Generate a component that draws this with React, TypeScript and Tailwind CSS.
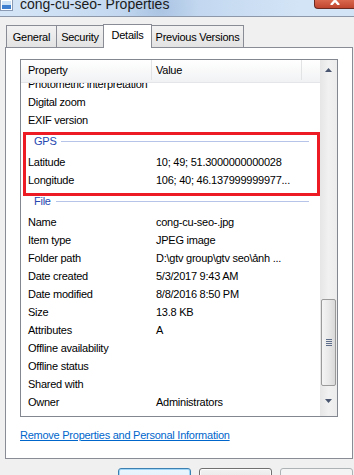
import React from 'react';

const font = { fontFamily: '"Liberation Sans", Arial, sans-serif' };

type Row = { p: string; v?: string };

const topRows: Row[] = [
  { p: 'Photometric interpretation' },
  { p: 'Digital zoom' },
  { p: 'EXIF version' },
];

const gpsRows: Row[] = [
  { p: 'Latitude', v: '10; 49; 51.3000000000028' },
  { p: 'Longitude', v: '106; 40; 46.137999999977...' },
];

const fileRows: Row[] = [
  { p: 'Name', v: 'cong-cu-seo-.jpg' },
  { p: 'Item type', v: 'JPEG image' },
  { p: 'Folder path', v: 'D:\\gtv group\\gtv seo\\ảnh ...' },
  { p: 'Date created', v: '5/3/2017 9:43 AM' },
  { p: 'Date modified', v: '8/8/2016 8:50 PM' },
  { p: 'Size', v: '13.8 KB' },
  { p: 'Attributes', v: 'A' },
  { p: 'Offline availability' },
  { p: 'Offline status' },
  { p: 'Shared with' },
  { p: 'Owner', v: 'Administrators' },
];

function PropRow({ p, v }: Row) {
  return (
    <div className="flex h-[18px] items-center whitespace-nowrap text-black">
      <div className="w-[135px] shrink-0 pl-[7px]">{p}</div>
      <div>{v}</div>
    </div>
  );
}

function GroupHeader({ label }: { label: string }) {
  return (
    <div className="flex h-[24px] items-center pt-[1px] pl-[13px] pr-[11px]">
      <span className="text-[#2647b0]">{label}</span>
      <div className="ml-[5px] h-px flex-1 bg-[#b7c4ea]" />
    </div>
  );
}

function Scrollbar() {
  return (
    <div className="flex w-[17px] shrink-0 flex-col bg-gradient-to-r from-[#e6e6e6] via-[#f1f1f1] to-[#ececec]">
      <div className="flex h-[17px] items-center justify-center pt-[3px]">
        <svg width="7" height="4" viewBox="0 0 7 4">
          <path d="M3.5 0 L7 4 L0 4 Z" fill="#4a5670" />
        </svg>
      </div>
      <div className="h-[222px]" />
      <div className="mx-[1px] flex h-[87px] items-center justify-center rounded-[2px] border border-[#9a9a9a] bg-gradient-to-r from-[#f4f4f4] via-[#e9e9e9] to-[#d9d9d9]">
        <div className="flex flex-col gap-[1px]">
          <div className="h-px w-[6px] bg-[#5e6e8a]" />
          <div className="h-px w-[6px] bg-[#5e6e8a]" />
          <div className="h-px w-[6px] bg-[#5e6e8a]" />
          <div className="h-px w-[6px] bg-[#5e6e8a]" />
        </div>
      </div>
      <div className="flex flex-1 items-center justify-center">
        <svg width="7" height="4" viewBox="0 0 7 4">
          <path d="M0 0 L7 0 L3.5 4 Z" fill="#4a5670" />
        </svg>
      </div>
    </div>
  );
}

export default function App() {
  return (
    <div
      className="h-[475px] w-[354px] overflow-hidden bg-[#f0f0f0] text-[11px] tracking-[-0.25px]"
      style={font}
    >
      {/* Title bar */}
      <div className="flex h-[17px] border-b border-[#8d99aa] bg-[radial-gradient(circle_at_160px_8px,#a9c3e2_0,#c3d8f0_40px,#d3e4f6_140px)]">
        <svg width="13" height="11" viewBox="0 0 13 11" className="shrink-0">
          <rect x="0.5" y="-1" width="12" height="11.5" fill="#ffffff" stroke="#8a9bb3" />
          <rect x="2" y="5" width="9" height="4" fill="#3f7fd0" />
          <rect x="2" y="1" width="9" height="4" fill="#cfe3f7" />
        </svg>
        <div className="ml-[7px] mt-[-3px] text-[14px] leading-[14px] tracking-normal text-[#1b1b1b]">
          cong-cu-seo- Properties
        </div>
        <div className="flex-1" />
        <div className="flex h-[9px] w-[40px] justify-center overflow-hidden rounded-bl-[4px] border-b border-l border-[#6a2a22] bg-gradient-to-b from-[#d9674e] to-[#c0452f]">
          <svg width="10" height="9" viewBox="0 0 10 9" className="mt-[-4px]">
            <path d="M1 0 L9 9 M9 0 L1 9" stroke="#ffffff" strokeWidth="2.4" />
          </svg>
        </div>
      </div>

      {/* Tabs */}
      <div className="mt-[7px] flex h-[23px] items-end pl-[6px]">
        <div className="z-0 flex h-[22px] w-[51px] items-center justify-center border border-b-0 border-[#898c95] bg-gradient-to-b from-[#f2f2f2] to-[#e3e3e3] pt-[2px]">
          General
        </div>
        <div className="z-0 -ml-px flex h-[22px] w-[48px] items-center justify-center border border-b-0 border-[#898c95] bg-gradient-to-b from-[#f2f2f2] to-[#e3e3e3] pt-[2px]">
          Security
        </div>
        <div className="relative z-10 -mb-px -ml-px flex h-[24px] w-[49px] items-center justify-center border border-b-0 border-[#898c95] bg-white pb-[2px]">
          Details
        </div>
        <div className="z-0 -ml-px flex h-[22px] w-[93px] items-center justify-center border border-b-0 border-[#898c95] bg-gradient-to-b from-[#f2f2f2] to-[#e3e3e3] pt-[2px]">
          Previous Versions
        </div>
      </div>

      {/* Tab panel */}
      <div className="ml-[5px] h-[412px] w-[348px] border border-[#898c95] bg-white px-[14px] pt-[11px]">
        <div className="relative flex h-[358px] w-[318px] border border-[#828790] bg-white">
          <div className="flex w-[299px] flex-col">
            <div className="flex h-[23px] shrink-0 border-b border-[#e3e5e8] bg-gradient-to-b from-white to-[#f1f2f4] pb-[2px]">
              <div className="flex w-[131px] items-center border-r border-[#e2e3e5] pl-[7px]">Property</div>
              <div className="flex w-[150px] items-center border-r border-[#e2e3e5] pl-[4px]">Value</div>
              <div className="flex-1" />
            </div>
            <div className="flex-1 overflow-hidden">
              <div className="mt-[-8px]">
                {topRows.map((r) => (
                  <PropRow key={r.p} {...r} />
                ))}
                <GroupHeader label="GPS" />
                {gpsRows.map((r) => (
                  <PropRow key={r.p} {...r} />
                ))}
                <GroupHeader label="File" />
                {fileRows.map((r) => (
                  <PropRow key={r.p} {...r} />
                ))}
              </div>
            </div>
          </div>
          <Scrollbar />

          {/* Red highlight annotation */}
          <div className="absolute left-[2px] top-[72px] h-[64px] w-[297px] border-[3px] border-[#ed1c24]" />
        </div>

        <div className="mt-[10px] text-[#0066cc] underline">Remove Properties and Personal Information</div>
      </div>

      {/* Buttons */}
      <div className="mt-[9px] flex gap-[8px] pl-[118px]">
        <div className="flex h-[23px] w-[73px] justify-center rounded-[3px] border border-[#3c7fb1] bg-gradient-to-b from-[#eaf6fd] to-[#d9eefc] pt-[2px] shadow-[inset_0_0_0_1px_#9fd5f7]">
          OK
        </div>
        <div className="flex h-[23px] w-[73px] justify-center rounded-[3px] border border-[#707070] bg-gradient-to-b from-[#f2f2f2] to-[#dddddd] pt-[2px] shadow-[inset_0_0_0_1px_#fcfcfc]">
          Cancel
        </div>
        <div className="flex h-[23px] w-[73px] justify-center rounded-[3px] border border-[#adb2b5] bg-[#f4f4f4] pt-[2px] text-[#838383]">
          Apply
        </div>
      </div>
    </div>
  );
}
